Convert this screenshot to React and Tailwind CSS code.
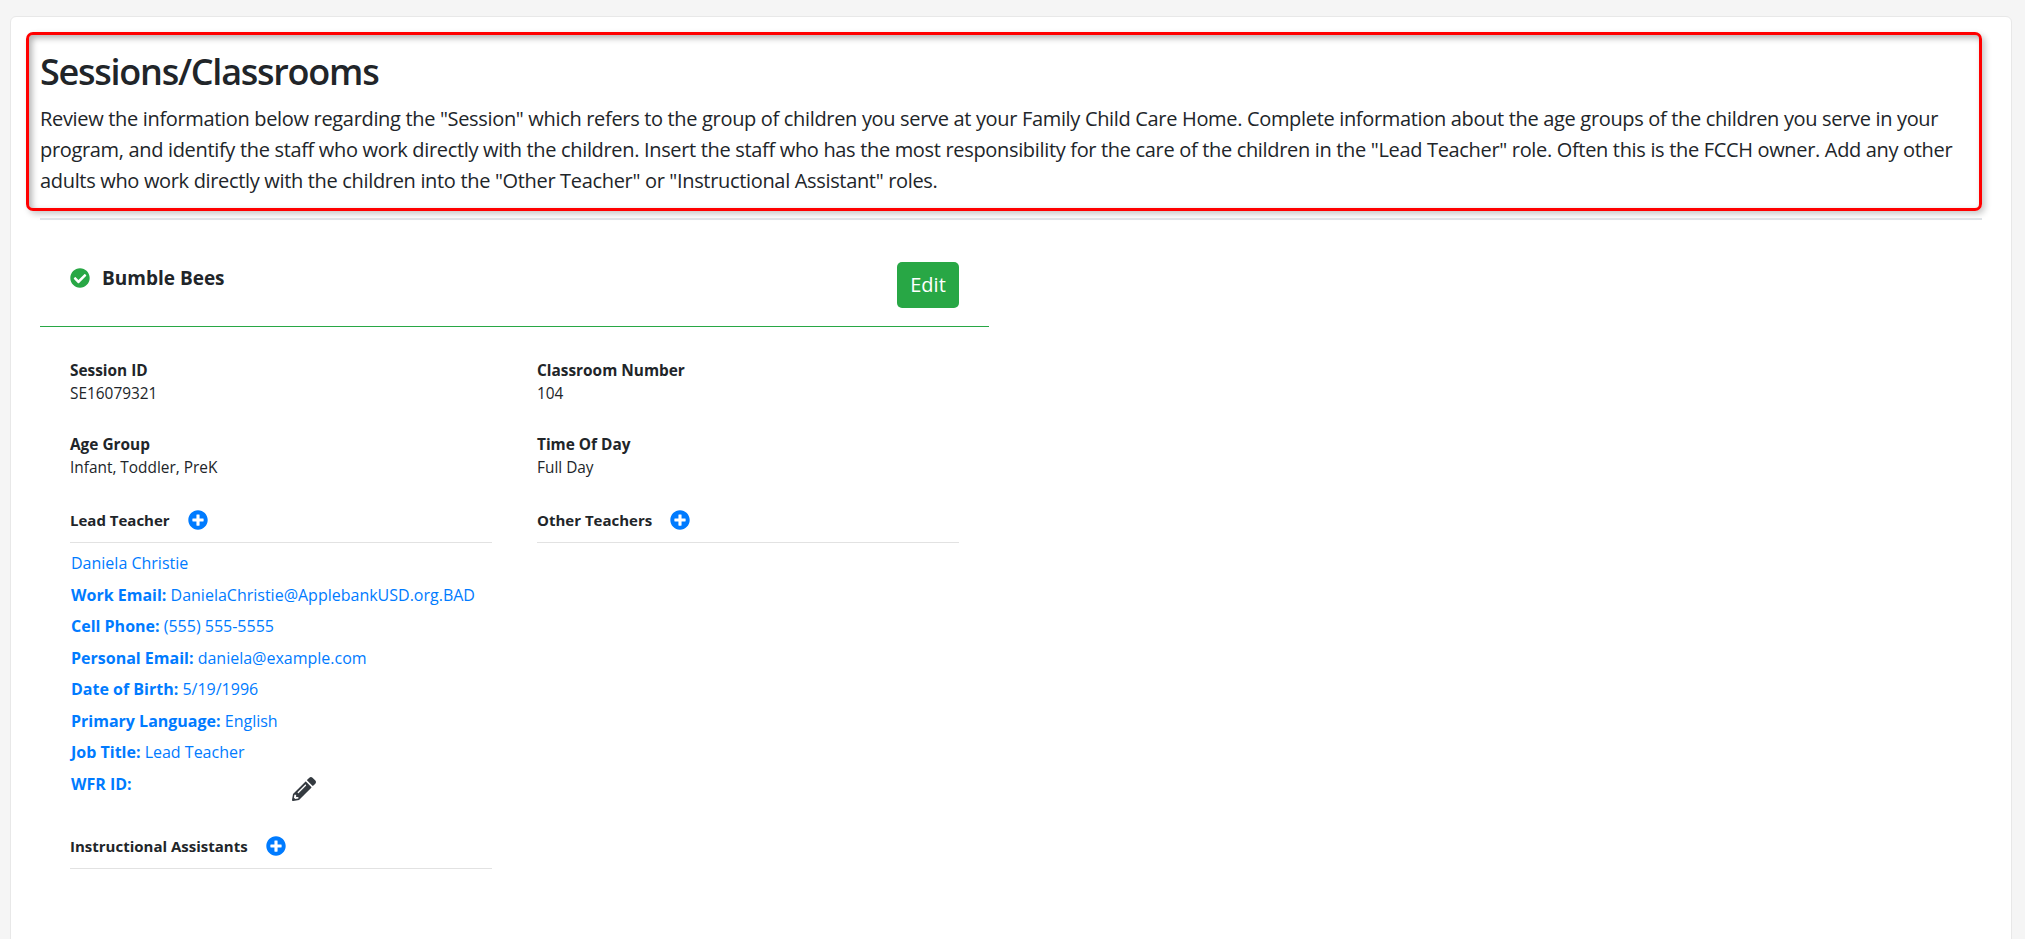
import { FaCheckCircle, FaPlusCircle, FaPencilAlt } from "react-icons/fa";

const staffFields = [
  { label: "Work Email:", value: "DanielaChristie@ApplebankUSD.org.BAD" },
  { label: "Cell Phone:", value: "(555) 555-5555" },
  { label: "Personal Email:", value: "daniela@example.com" },
  { label: "Date of Birth:", value: "5/19/1996" },
  { label: "Primary Language:", value: "English" },
  { label: "Job Title:", value: "Lead Teacher" },
];

const Field = ({ label, value }) => (
  <div className="h-[73.5px] text-[#212529]">
    <div className="text-[15.4px] font-bold leading-[25px]">{label}</div>
    <div className="-mt-[1px] text-[15.4px] leading-[24px]">{value}</div>
  </div>
);

const RoleHeader = ({ title }) => (
  <div className="flex h-[38px] items-center gap-[18px] border-b border-[#e2e2e2] pb-[6px]">
    <span className="text-[15px] font-bold text-[#212529]">{title}</span>
    <FaPlusCircle className="mb-[2px] text-[20px] text-[#007bff]" />
  </div>
);

export default function App() {
  return (
    <div className="h-[939px] overflow-hidden bg-[#f5f5f5] pl-[10px] pr-[13px] pt-[16px] font-['Open_Sans',sans-serif]">
      <div className="h-[940px] rounded-t-[6px] border border-[#e8e8e8] bg-white pl-[15px] pr-[29px] pt-[15px]">
        <div className="h-[179px] rounded-[7px] border-[3px] border-[#ff0000] pl-[11px] pr-[20px] pt-[13px] shadow-[inset_3px_3px_6px_rgba(0,0,0,0.3),3px_3px_6px_rgba(0,0,0,0.22)]">
          <h2 className="text-[36px] font-semibold leading-[48px] tracking-[-1.25px] text-[#212529]">Sessions/Classrooms</h2>
          <p className="mt-[7px] text-[20px] leading-[31px] tracking-[-0.33px] text-[#212529]">
            Review the information below regarding the "Session" which refers to the group of children you serve at your Family Child Care Home. Complete information about the age groups of the children you serve in your program, and identify the staff who work directly with the children. Insert the staff who has the most responsibility for the care of the children in the "Lead Teacher" role. Often this is the FCCH owner. Add any other adults who work directly with the children into the "Other Teacher" or "Instructional Assistant" roles.
          </p>
        </div>
        <hr className="ml-[14px] mt-[7px] border-t-2 border-[#dee2e6]" />

        <div className="ml-[14px] w-[949px]">
          <div className="flex h-[107px] items-start justify-between border-b border-[#28a745] pl-[30px] pr-[30px]">
            <div className="mt-[44px] flex items-center gap-[12px]">
              <FaCheckCircle className="text-[20px] text-[#28a745]" />
              <span className="text-[19px] font-bold text-[#212529]">Bumble Bees</span>
            </div>
            <button type="button" className="mt-[42px] h-[46px] w-[62px] rounded-[5px] bg-[#28a745] text-[20px] text-white">
              Edit
            </button>
          </div>

          <div className="flex pt-[31px]">
            <div className="ml-[30px] w-[422px]">
              <Field label="Session ID" value="SE16079321" />
              <Field label="Age Group" value="Infant, Toddler, PreK" />
              <RoleHeader title="Lead Teacher" />
              <div className="pl-[1px] pt-[5px] text-[16px] leading-[31.5px] text-[#007bff]">
                <div>Daniela Christie</div>
                {staffFields.map((field) => (
                  <div key={field.label}>
                    <span className="font-bold">{field.label}</span> {field.value}
                  </div>
                ))}
                <div className="relative font-bold">
                  WFR ID:
                  <FaPencilAlt className="absolute left-[221px] top-[8px] text-[24px] text-[#343a40]" />
                </div>
              </div>
              <div className="mt-[31px]">
                <RoleHeader title="Instructional Assistants" />
              </div>
            </div>
            <div className="ml-[45px] w-[422px]">
              <Field label="Classroom Number" value="104" />
              <Field label="Time Of Day" value="Full Day" />
              <RoleHeader title="Other Teachers" />
            </div>
          </div>
        </div>
      </div>
    </div>
  );
}
